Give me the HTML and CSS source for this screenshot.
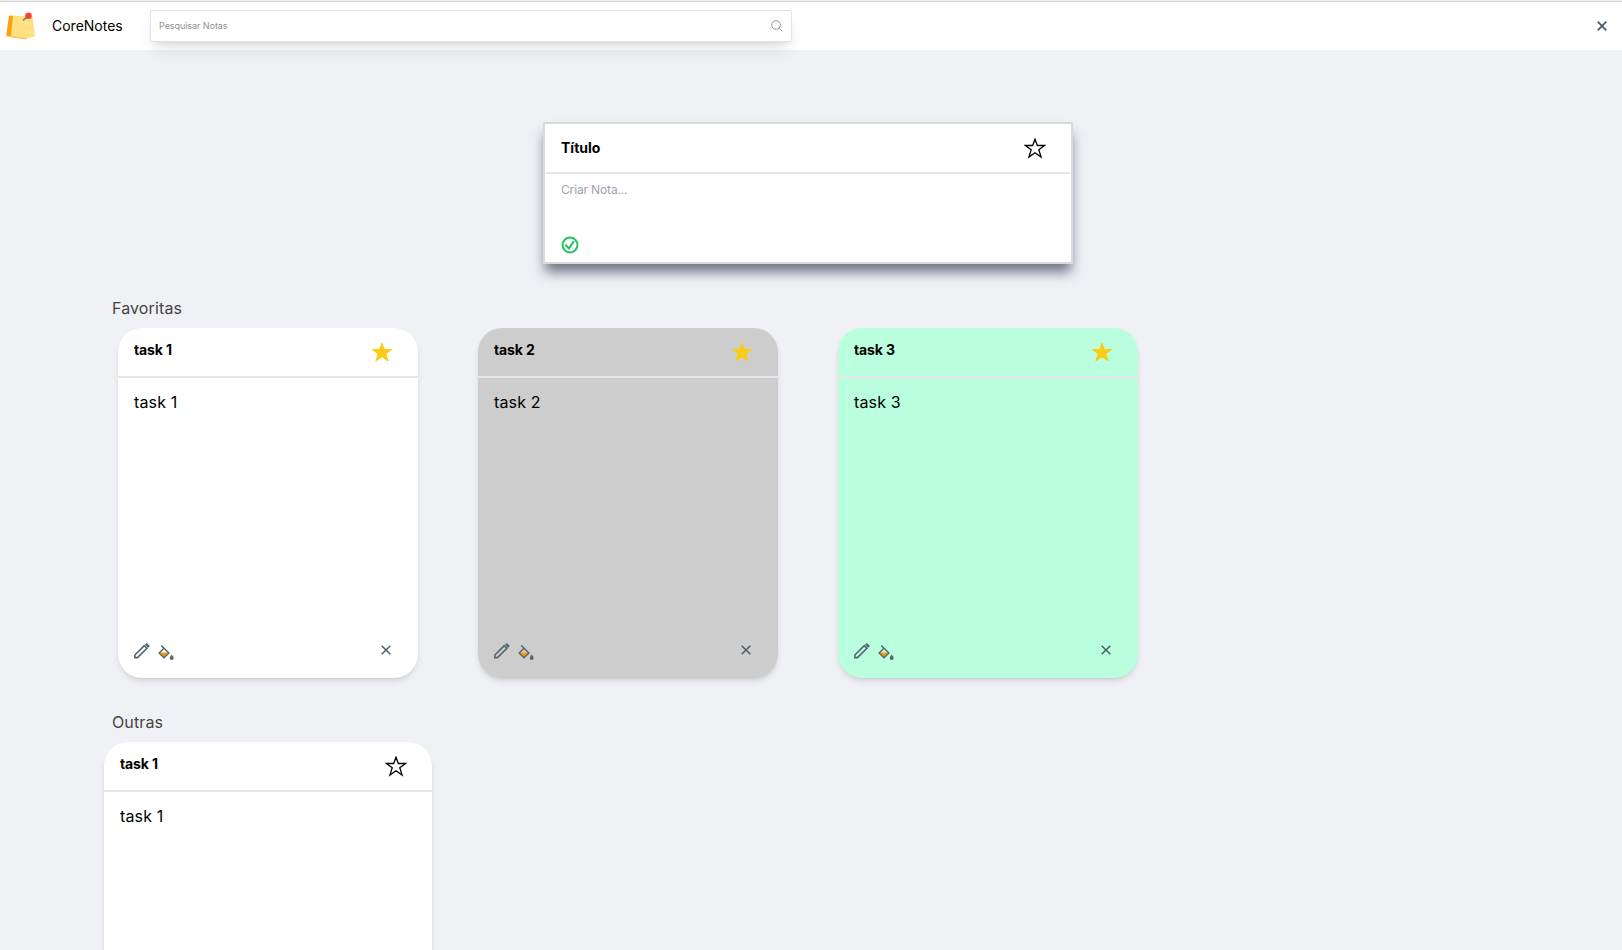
FILE: index.html
```html
<!DOCTYPE html>
<html lang="pt-BR">
<head>
<meta charset="utf-8">
<title>CoreNotes</title>
<link rel="stylesheet" href="styles.css">
</head>
<body>
<svg width="0" height="0" class="defs">
  <symbol id="star" viewBox="0 0 22 21"><path d="M11 1.200 13.300 7.500H20.700L14.800 11.700 17.100 19 11 14.700 4.900 19 7.200 11.700 1.300 7.500H8.700Z"/></symbol>
  <symbol id="close" viewBox="0 0 10 10"><path d="M.7.7 9.3 9.3M9.3.7.7 9.3"/></symbol>
  <symbol id="pencil" viewBox="0 0 16 16"><path fill="none" stroke="#51646f" stroke-width="1.6" d="M.9 14.600V12L10.300 2.600 12.900 5.200 3.500 14.600Z"/><path fill="#51646f" d="M11 1.500 12 .5Q12.700-.1 13.400.5L15.300 2.400Q15.900 3.100 15.300 3.800L14.200 4.700Z"/></symbol>
  <symbol id="bucket" viewBox="0 0 16 15"><path fill="#ff9800" d="M1.600 7.500H10.400L6 12.600Z"/><path fill="none" stroke="#51646f" stroke-width="1.4" d="M3.200.4 10.900 8 6 12.800 1.100 8 6 3.200"/><path fill="#51646f" d="M13.600 9.500Q15.600 12 15.600 13A1.800 1.800 0 0 1 11.800 13Q11.800 12 13.600 9.500Z"/></symbol>
</svg>
<header class="topbar">
  <svg class="logo" viewBox="0 0 30 28">
    <path fill="#ff9f10" d="M3 3.500 12 4 10 25 .2 24.200Z"/>
    <path fill="#ffbd4a" d="M5 24 21 25.500 20.500 27.200 5 25.500Z"/>
    <path fill="#ffe082" d="M7 4 26.500 4.500 29 24.500 21 26 5 24Z"/>
    <path stroke="#667780" stroke-width="1.500" d="M17 8.500 21 5"/>
    <circle cx="22.500" cy="3.800" r="3.300" fill="#f44336"/>
  </svg>
  <h1 class="brand">CoreNotes</h1>
  <div class="search">
    <span>Pesquisar Notas</span>
    <svg class="lens" viewBox="0 0 12 12"><circle cx="5" cy="5" r="4.300"/><path d="M8.100 8.100 11.300 11.300"/></svg>
  </div>
  <svg class="x x-top"><use href="#close"/></svg>
</header>
<main>
  <section class="create">
    <div class="note-head"><strong>Título</strong><svg class="star"><use href="#star"/></svg></div>
    <p class="hint">Criar Nota...</p>
    <svg class="check" viewBox="0 0 18 18"><circle cx="9" cy="9" r="7.500"/><path d="M4.400 8.700 7.900 12.400 13 5.200"/></svg>
  </section>
  <h2>Favoritas</h2>
  <div class="cards favorites">
    <article class="note">
      <div class="note-head"><strong>task 1</strong><svg class="star on"><use href="#star"/></svg></div>
      <p>task 1</p>
      <footer><svg class="pencil"><use href="#pencil"/></svg><svg class="bucket"><use href="#bucket"/></svg><svg class="x"><use href="#close"/></svg></footer>
    </article>
    <article class="note grey">
      <div class="note-head"><strong>task 2</strong><svg class="star on"><use href="#star"/></svg></div>
      <p>task 2</p>
      <footer><svg class="pencil"><use href="#pencil"/></svg><svg class="bucket"><use href="#bucket"/></svg><svg class="x"><use href="#close"/></svg></footer>
    </article>
    <article class="note mint">
      <div class="note-head"><strong>task 3</strong><svg class="star on"><use href="#star"/></svg></div>
      <p>task 3</p>
      <footer><svg class="pencil"><use href="#pencil"/></svg><svg class="bucket"><use href="#bucket"/></svg><svg class="x"><use href="#close"/></svg></footer>
    </article>
  </div>
  <h2>Outras</h2>
  <div class="cards others">
    <article class="note wide">
      <div class="note-head"><strong>task 1</strong><svg class="star"><use href="#star"/></svg></div>
      <p>task 1</p>
    </article>
  </div>
</main>
</body>
</html>
```
FILE: styles.css
```css
* { box-sizing: border-box; margin: 0; }
body { height: 950px; overflow: hidden; background: #f0f1f5; color: #000; font-family: Inter, sans-serif; font-size: 16px; }
svg { display: block; flex: none; }
.defs { position: absolute; }
.topbar { display: flex; align-items: flex-start; height: 50px; padding: 8px 15px 0 6px; background: #fff; border-top: 1px solid #f0f0f0; box-shadow: inset 0 1px #d3d3d3; }
.logo { width: 30px; height: 28px; margin-top: 3px; }
.brand { width: 98px; margin-left: 16px; font-size: 14px; font-weight: 400; line-height: 20px; padding-top: 7px; }
.search { display: flex; align-items: center; justify-content: space-between; width: 642px; height: 32px; margin-top: 1px; padding: 0 8px 2px 8px; border: 1px solid #e2e3e6; border-radius: 2px; background: #fff; box-shadow: 0 10px 15px -3px #0000001a, 0 4px 6px -4px #0000001a; color: #909090; font-size: 9px; letter-spacing: -.06px; }
.lens { width: 12px; height: 12px; margin-top: 1px; fill: none; stroke: #8d8d8d; stroke-width: .9; }
.x { width: 10px; height: 10px; fill: none; stroke: #455a64; stroke-width: 1.4; }
.x-top { margin: 12px 0 0 auto; stroke-width: 1.7; }
main { height: 900px; padding-top: 72px; overflow: hidden; }
.create { width: 530px; height: 142px; margin-left: 543px; border: 2px solid #d8d9db; background: #fff; box-shadow: 0 10px 12px -2px #4b5366cc; }
.note-head { display: flex; justify-content: space-between; height: 50px; padding: 12px 25px 0 16px; border-bottom: 2px solid #e5e7eb; font-size: 14px; line-height: 20px; }
.create .note-head { padding-top: 14px; }
.star { width: 22px; height: 21px; fill: none; stroke: #000; stroke-width: 1.3; }
.star.on { fill: #facc15; stroke: #facc15; stroke-width: 1; }
.note .star { margin-top: 2px; }
.note strong { letter-spacing: -.12px; }
.create .hint { padding: 8px 16px 0; color: #9ca3af; font-size: 12px; line-height: 16px; letter-spacing: -.15px; }
.check { width: 18px; height: 18px; margin: 38px 0 0 16px; fill: none; stroke: #22c55e; stroke-width: 2; }
h2 { margin: 32px 0 0 112px; color: #444; font-size: 16px; font-weight: 400; line-height: 24px; letter-spacing: .12px; }
.cards { display: flex; margin-top: 8px; }
.favorites { gap: 60px; padding-left: 118px; }
.others { padding-left: 104px; }
.note { display: flex; flex-direction: column; width: 300px; height: 350px; border-radius: 24px; background: #fff; box-shadow: 0 4px 6px -1px #0000001a, 0 2px 4px -2px #0000001a; }
.note.grey { background: #cdcdcd; }
.note.mint { background: #baffdd; }
.note.wide { width: 328px; }
.note p { padding: 12px 16px; line-height: 24px; letter-spacing: .16px; }
.note footer { display: flex; align-items: flex-start; height: 35px; margin-top: auto; padding: 0 27px 0 16px; }
.pencil { width: 16px; height: 16px; }
.bucket { width: 16px; height: 15px; margin: 2px 0 0 8px; }
.note footer .x { margin: 2px 0 0 auto; }
```
